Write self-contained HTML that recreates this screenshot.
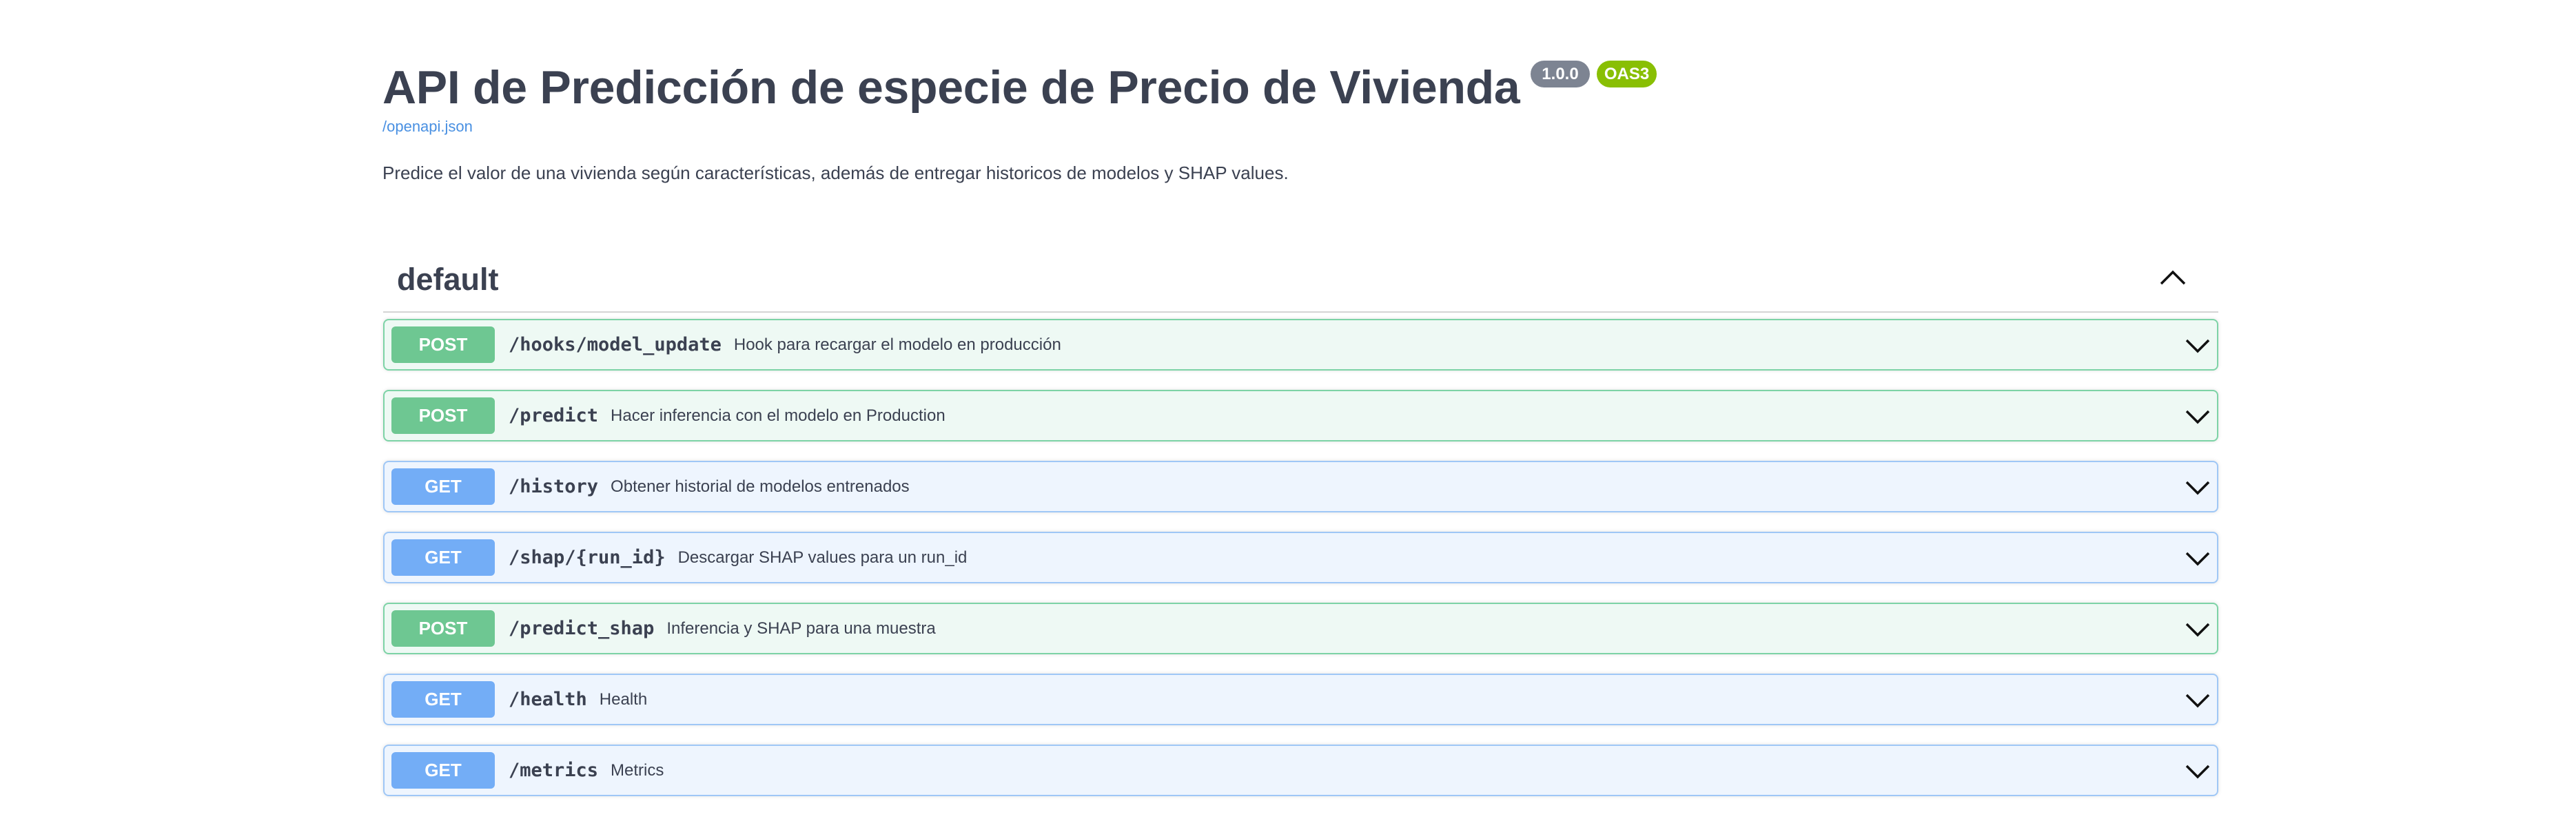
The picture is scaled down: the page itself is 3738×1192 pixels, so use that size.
<!DOCTYPE html>
<html><head><meta charset="utf-8"><style>
*{margin:0;padding:0;box-sizing:border-box}
body{width:3738px;height:1192px;background:#fff;font-family:"Liberation Sans",sans-serif;color:#3b4151;position:relative;overflow:hidden}
.title{position:absolute;left:555px;top:87px;font-size:68px;font-weight:bold;line-height:80px;white-space:nowrap;letter-spacing:-0.3px}
.badge{position:absolute;top:88px;height:39px;border-radius:20px;color:#fff;font-size:24px;font-weight:bold;line-height:39px;text-align:center}
.link{position:absolute;left:555px;top:171px;font-size:22px;color:#4990e2}
.desc{position:absolute;left:555px;top:236px;font-size:26px;color:#3b4151}
.tag{position:absolute;left:576px;top:380px;font-size:45px;font-weight:bold}
.sep{position:absolute;left:556px;width:2663px;top:452px;height:2px;background:#d4d4d4}
.up{position:absolute;left:3133px;top:390px}
.op{position:absolute;left:556px;width:2663px;height:75px;border-radius:8px;display:flex;align-items:center;box-shadow:0 0 6px rgba(0,0,0,.12)}
.post{background:#eef9f4;border:2px solid #7dd3a6}
.get{background:#eef5fe;border:2px solid #9fc7f6}
.m{margin-left:10px;width:150px;height:53px;border-radius:6px;color:#fff;font-weight:bold;font-size:26px;display:flex;align-items:center;justify-content:center}
.post .m{background:#6ec792}
.get .m{background:#73adf6}
.p{margin-left:20px;font-family:"DejaVu Sans Mono","Liberation Mono",monospace;font-weight:bold;font-size:27px;color:#3b4151}
.d{margin-left:18px;font-size:24px;color:#3b4151}
.ch{position:absolute;right:10px;top:25px}
</style></head><body>
<div class="title">API de Predicción de especie de Precio de Vivienda</div>
<div class="badge" style="left:2221px;width:86px;background:#7d8492">1.0.0</div>
<div class="badge" style="left:2317px;width:87px;background:#89bf04">OAS3</div>
<div class="link">/openapi.json</div>
<div class="desc">Predice el valor de una vivienda según características, además de entregar historicos de modelos y SHAP values.</div>
<div class="tag">default</div>
<svg class="up" width="40" height="26" viewBox="0 0 40 26"><path d="M3 22 L20 5 L37 22" fill="none" stroke="#111" stroke-width="3.5"/></svg>
<div class="sep"></div>

<div class="op post" style="top:463px"><div class="m">POST</div><div class="p">/hooks/model_update</div><div class="d">Hook para recargar el modelo en producción</div><svg class="ch" width="36" height="24" viewBox="0 0 36 24"><path d="M2 4 L18 20 L34 4" fill="none" stroke="#111" stroke-width="3.5"/></svg></div>
<div class="op post" style="top:566px"><div class="m">POST</div><div class="p">/predict</div><div class="d">Hacer inferencia con el modelo en Production</div><svg class="ch" width="36" height="24" viewBox="0 0 36 24"><path d="M2 4 L18 20 L34 4" fill="none" stroke="#111" stroke-width="3.5"/></svg></div>
<div class="op get" style="top:669px"><div class="m">GET</div><div class="p">/history</div><div class="d">Obtener historial de modelos entrenados</div><svg class="ch" width="36" height="24" viewBox="0 0 36 24"><path d="M2 4 L18 20 L34 4" fill="none" stroke="#111" stroke-width="3.5"/></svg></div>
<div class="op get" style="top:772px"><div class="m">GET</div><div class="p">/shap/{run_id}</div><div class="d">Descargar SHAP values para un run_id</div><svg class="ch" width="36" height="24" viewBox="0 0 36 24"><path d="M2 4 L18 20 L34 4" fill="none" stroke="#111" stroke-width="3.5"/></svg></div>
<div class="op post" style="top:875px"><div class="m">POST</div><div class="p">/predict_shap</div><div class="d">Inferencia y SHAP para una muestra</div><svg class="ch" width="36" height="24" viewBox="0 0 36 24"><path d="M2 4 L18 20 L34 4" fill="none" stroke="#111" stroke-width="3.5"/></svg></div>
<div class="op get" style="top:978px"><div class="m">GET</div><div class="p">/health</div><div class="d">Health</div><svg class="ch" width="36" height="24" viewBox="0 0 36 24"><path d="M2 4 L18 20 L34 4" fill="none" stroke="#111" stroke-width="3.5"/></svg></div>
<div class="op get" style="top:1081px"><div class="m">GET</div><div class="p">/metrics</div><div class="d">Metrics</div><svg class="ch" width="36" height="24" viewBox="0 0 36 24"><path d="M2 4 L18 20 L34 4" fill="none" stroke="#111" stroke-width="3.5"/></svg></div>
</body></html>
